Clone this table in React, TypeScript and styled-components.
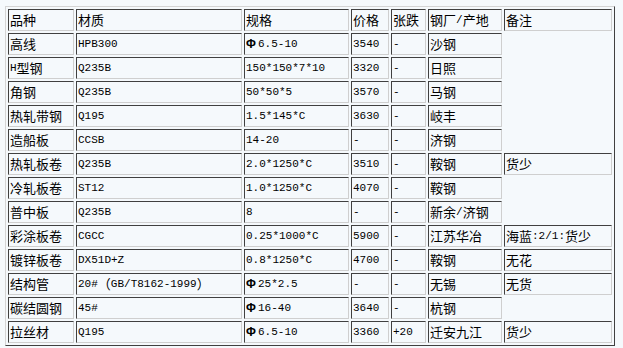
import React from 'react';
import styled, { createGlobalStyle } from 'styled-components';

const GlobalStyle = createGlobalStyle`
  html, body {
    margin: 0;
    background: #f5f9fc;
  }
  body {
    font-family: "Noto Sans CJK SC", "Liberation Sans", sans-serif;
    font-size: 13px;
    color: #000;
  }
`;

const PriceTable = styled.table`
  margin: 6px 0 0 5px;
  width: 610px;
  table-layout: fixed;
  border-collapse: separate;
  border-spacing: 2px;
  border: 1px solid;
  border-color: #d4d4d4 #404040 #404040 #d4d4d4;
`;

const Cell = styled.td<{ $empty?: boolean }>`
  box-sizing: border-box;
  height: 22px;
  padding: 0 1px;
  border: 1px solid;
  border-color: ${p => (p.$empty ? 'transparent' : '#404040 #cfcfcf #cfcfcf #404040')};
  vertical-align: middle;
`;

const CellText = styled.div`
  display: flex;
  align-items: center;
  height: 20px;
  overflow: hidden;
  white-space: pre;
  line-height: 20px;
`;

const Latin = styled.span`
  font-family: "Liberation Mono", "DejaVu Sans Mono", monospace;
  font-size: 11px;
  line-height: 20px;
  color: #000;
`;

const Phi = styled.span`
  width: 12px;
  font-family: "Liberation Sans", sans-serif;
  font-size: 12px;
  font-weight: bold;
  line-height: 18px;
`;

const widths = [66, 166, 105, 38, 35, 74, 108];

const header = ['品种', '材质', '规格', '价格', '张跌', '钢厂/产地', '备注'];

const rows: string[][] = [
  ['高线', 'HPB300', 'Φ6.5-10', '3540', '-', '沙钢', ''],
  ['H型钢', 'Q235B', '150*150*7*10', '3320', '-', '日照', ''],
  ['角钢', 'Q235B', '50*50*5', '3570', '-', '马钢', ''],
  ['热轧带钢', 'Q195', '1.5*145*C', '3630', '-', '岐丰', ''],
  ['造船板', 'CCSB', '14-20', '-', '-', '济钢', ''],
  ['热轧板卷', 'Q235B', '2.0*1250*C', '3510', '-', '鞍钢', '货少'],
  ['冷轧板卷', 'ST12', '1.0*1250*C', '4070', '-', '鞍钢', ''],
  ['普中板', 'Q235B', '8', '-', '-', '新余/济钢', ''],
  ['彩涂板卷', 'CGCC', '0.25*1000*C', '5900', '-', '江苏华冶', '海蓝:2/1:货少'],
  ['镀锌板卷', 'DX51D+Z', '0.8*1250*C', '4700', '-', '鞍钢', '无花'],
  ['结构管', '20#（GB/T8162-1999）', 'Φ25*2.5', '-', '-', '无锡', '无货'],
  ['碳结圆钢', '45#', 'Φ16-40', '3640', '-', '杭钢', ''],
  ['拉丝材', 'Q195', 'Φ6.5-10', '3360', '+20', '迁安九江', '货少'],
];

// split text into CJK runs and half-width runs, like the old bitmap font did
const renderText = (text: string) =>
  text
    .split(/(Φ|[\u3000-\u9fff\uff00-\uffef]+)/)
    .filter(Boolean)
    .map((part, i) => {
      if (part === 'Φ') return <Phi key={i}>Φ</Phi>;
      if (/[\u3000-\u9fff\uff00-\uffef]/.test(part)) return <span key={i}>{part}</span>;
      return <Latin key={i}>{part}</Latin>;
    });

export default function App() {
  return (
    <>
      <GlobalStyle />
      <PriceTable>
        <colgroup>
          {widths.map((w, i) => (
            <col key={i} style={{ width: w }} />
          ))}
        </colgroup>
        <tbody>
          <tr>
            {header.map(h => (
              <Cell key={h}>
                <CellText>{renderText(h)}</CellText>
              </Cell>
            ))}
          </tr>
          {rows.map(row => (
            <tr key={row[0]}>
              {row.map((v, i) => (
                <Cell key={i} $empty={v === ''}>
                  <CellText>{renderText(v)}</CellText>
                </Cell>
              ))}
            </tr>
          ))}
        </tbody>
      </PriceTable>
    </>
  );
}
